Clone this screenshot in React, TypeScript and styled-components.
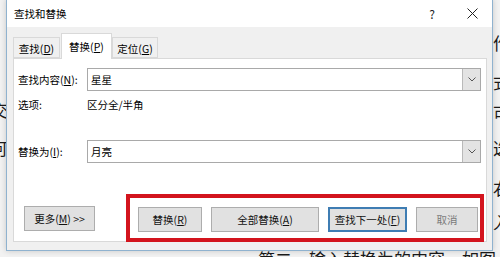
import styled, { createGlobalStyle } from 'styled-components';

const GlobalStyle = createGlobalStyle`
  html, body { margin: 0; padding: 0; }
  body {
    font-family: "Noto Sans CJK SC", "Noto Sans", sans-serif;
    color: #000;
  }
`;

// the word document that sits behind the dialog
const Desktop = styled.div`
  position: relative;
  width: 500px;
  height: 257px;
  overflow: hidden;
  background: #f2f2f2;
`;

const DocText = styled.span<{ $top: number; $left: number }>`
  position: absolute;
  top: ${(p) => p.$top}px;
  left: ${(p) => p.$left}px;
  font-family: "Noto Sans CJK SC", sans-serif;
  font-size: 17px;
  line-height: 20px;
  color: #1a1a1a;
  white-space: nowrap;
`;

const Window = styled.div`
  position: absolute;
  left: 6px;
  top: -1px;
  width: 487px;
  height: 252px;
  box-sizing: border-box;
  border: 1px solid #8fb2cf;
  background: #f0f0f0;
  display: flex;
  flex-direction: column;
  box-shadow: 0 0 6px rgba(0, 0, 0, 0.18);
`;

const TitleBar = styled.div`
  height: 27px;
  flex: none;
  background: #fff;
  display: flex;
  align-items: center;
  padding-left: 7px;
  font-size: 10.5px;
`;

const TitleText = styled.span`
  flex: 1;
`;

const TitleButton = styled.span`
  width: 40px;
  display: flex;
  justify-content: center;
  font-size: 12px;
  color: #222;
`;

const Body = styled.div`
  flex: 1;
  padding: 6px 5px 0 6px;
  display: flex;
  flex-direction: column;
`;

const TabRow = styled.div`
  display: flex;
  align-items: flex-end;
  height: 25px;
  position: relative;
  z-index: 1;
`;

const Tab = styled.div<{ $active?: boolean; $width: number }>`
  width: ${(p) => p.$width}px;
  height: ${(p) => (p.$active ? 26 : 21)}px;
  box-sizing: border-box;
  border: 1px solid #d9d9d9;
  border-bottom: ${(p) => (p.$active ? 'none' : '1px solid #d9d9d9')};
  background: ${(p) => (p.$active ? '#fff' : '#f0f0f0')};
  margin-bottom: ${(p) => (p.$active ? -1 : 0)}px;
  margin-left: ${(p) => (p.$active ? 1 : 0)}px;
  display: flex;
  align-items: center;
  justify-content: center;
  padding-top: ${(p) => (p.$active ? 0 : 1)}px;
  font-size: 10.5px;
`;

const Panel = styled.div`
  height: 184px;
  box-sizing: border-box;
  background: #fff;
  border: 1px solid #d9d9d9;
  padding: 9px 5px 0 4px;
  display: flex;
  flex-direction: column;
`;

const FieldRow = styled.div<{ $gap?: number }>`
  display: grid;
  grid-template-columns: 69px 1fr;
  align-items: center;
  margin-top: ${(p) => p.$gap ?? 0}px;
  font-size: 10.5px;
`;

const Label = styled.span`
  padding-left: 0;
`;

const Combo = styled.div`
  height: 23px;
  box-sizing: border-box;
  border: 1px solid #a9a9a9;
  display: flex;
  align-items: stretch;
`;

const ComboText = styled.span`
  flex: 1;
  display: flex;
  align-items: center;
  padding-left: 3px;
  font-size: 10.5px;
`;

const ComboArrow = styled.span`
  width: 17px;
  background: #e3e3e3;
  border-left: 1px solid #b9b9b9;
  display: flex;
  align-items: center;
  justify-content: center;
`;

const OptionsValue = styled.span`
  line-height: 12px;
`;

const ButtonRow = styled.div`
  display: flex;
  align-items: center;
  margin-top: 31px;
  margin-right: -3px;
`;

const Button = styled.div<{ $width: number; $primary?: boolean; $muted?: boolean }>`
  width: ${(p) => p.$width}px;
  height: 25px;
  box-sizing: border-box;
  background: #e1e1e1;
  border: ${(p) => (p.$primary ? '2px solid #3f7db3' : '1px solid #adadad')};
  display: flex;
  align-items: center;
  justify-content: center;
  font-size: 10.5px;
  color: ${(p) => (p.$muted ? '#7a7a7a' : '#111')};
  white-space: nowrap;
`;

const MoreButton = styled(Button)`
  margin-left: 6px;
`;

// the red annotation frame around the action buttons
const Highlight = styled.div`
  margin-left: auto;
  border: 4px solid #d3141d;
  padding: 9px 2px 6px 8px;
  display: flex;
  gap: 9px;
`;

const Chevron = () => (
  <svg width="8" height="5" viewBox="0 0 8 5">
    <path d="M0.5 0.5 L4 4 L7.5 0.5" fill="none" stroke="#555" strokeWidth="1" />
  </svg>
);

const CloseIcon = () => (
  <svg width="11" height="11" viewBox="0 0 11 11">
    <path d="M0.5 0.5 L10.5 10.5 M10.5 0.5 L0.5 10.5" stroke="#222" strokeWidth="1" />
  </svg>
);

export default function App() {
  return (
    <>
      <GlobalStyle />
      <Desktop>
        <DocText $top={100} $left={-9}>交</DocText>
        <DocText $top={138} $left={-10}>何</DocText>
        <DocText $top={33} $left={493}>作</DocText>
        <DocText $top={72} $left={493}>式</DocText>
        <DocText $top={103} $left={493}>可</DocText>
        <DocText $top={138} $left={493}>选</DocText>
        <DocText $top={178} $left={493}>右</DocText>
        <DocText $top={212} $left={493}>入</DocText>
        <DocText $top={249} $left={258}>第二、输入替换为的内容，如图</DocText>

        <Window>
          <TitleBar>
            <TitleText>查找和替换</TitleText>
            <TitleButton>?</TitleButton>
            <TitleButton>
              <CloseIcon />
            </TitleButton>
          </TitleBar>
          <Body>
            <TabRow>
              <Tab $width={47}>查找(<u>D</u>)</Tab>
              <Tab $width={51} $active>替换(<u>P</u>)</Tab>
              <Tab $width={46}>定位(<u>G</u>)</Tab>
            </TabRow>
            <Panel>
              <FieldRow>
                <Label>查找内容(<u>N</u>):</Label>
                <Combo>
                  <ComboText>星星</ComboText>
                  <ComboArrow><Chevron /></ComboArrow>
                </Combo>
              </FieldRow>
              <FieldRow $gap={6}>
                <Label>选项:</Label>
                <OptionsValue>区分全/半角</OptionsValue>
              </FieldRow>
              <FieldRow $gap={28}>
                <Label>替换为(<u>I</u>):</Label>
                <Combo>
                  <ComboText>月亮</ComboText>
                  <ComboArrow><Chevron /></ComboArrow>
                </Combo>
              </FieldRow>
              <ButtonRow>
                <MoreButton $width={71}>更多(<u>M</u>) &gt;&gt;</MoreButton>
                <Highlight>
                  <Button $width={64}>替换(<u>R</u>)</Button>
                  <Button $width={108}>全部替换(<u>A</u>)</Button>
                  <Button $width={79} $primary>查找下一处(<u>F</u>)</Button>
                  <Button $width={62} $muted>取消</Button>
                </Highlight>
              </ButtonRow>
            </Panel>
          </Body>
        </Window>
      </Desktop>
    </>
  );
}
